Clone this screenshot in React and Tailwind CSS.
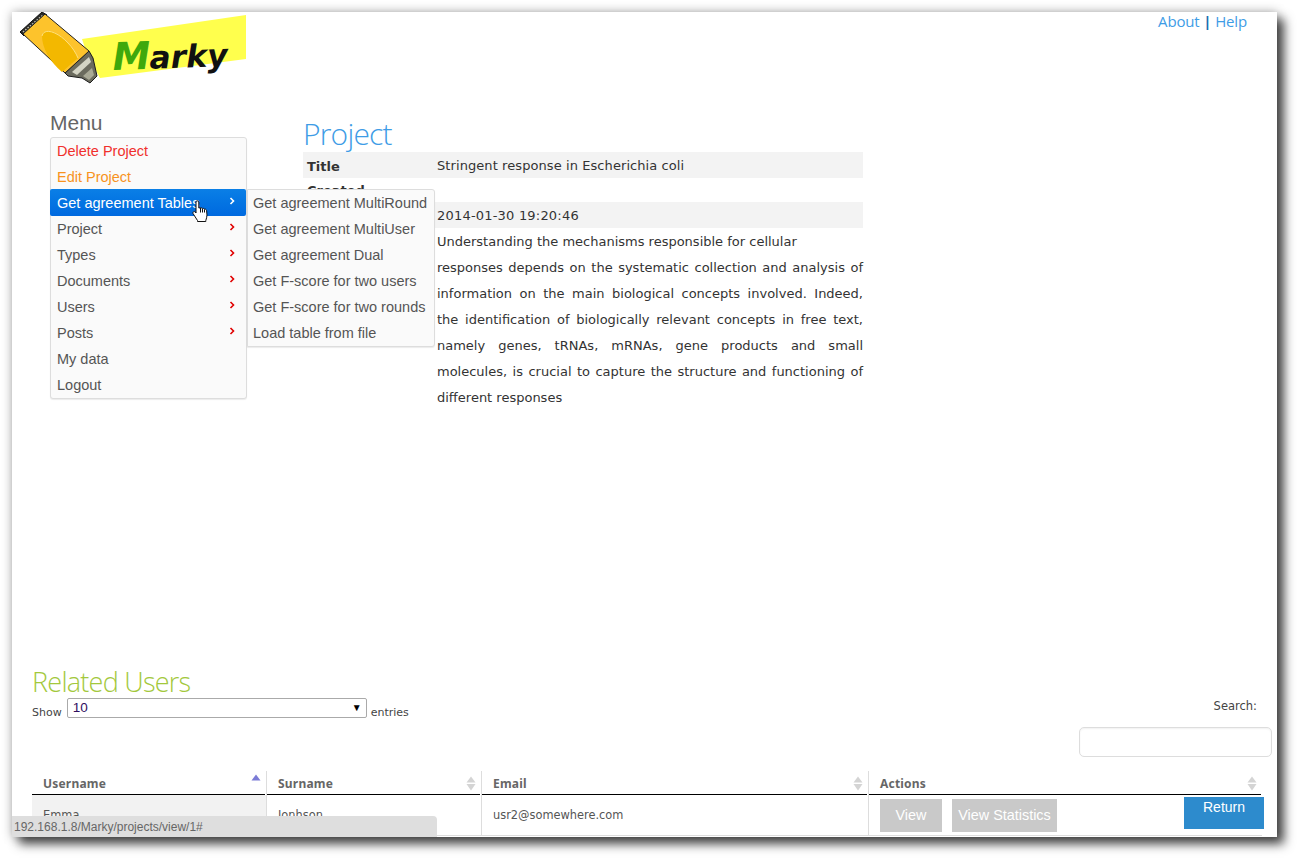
import React from "react";

const menuItems = [
  { label: "Delete Project", color: "text-[#f0302c]" },
  { label: "Edit Project", color: "text-[#f7931e]" },
  { label: "Get agreement Tables", arrow: true, active: true },
  { label: "Project", arrow: true },
  { label: "Types", arrow: true },
  { label: "Documents", arrow: true },
  { label: "Users", arrow: true },
  { label: "Posts", arrow: true },
  { label: "My data" },
  { label: "Logout" },
];

const subItems = [
  "Get agreement MultiRound",
  "Get agreement MultiUser",
  "Get agreement Dual",
  "Get F-score for two users",
  "Get F-score for two rounds",
  "Load table from file",
];

function Logo() {
  return (
    <svg width="240" height="88" viewBox="0 0 240 88" className="block">
      <polygon points="70,27 234,3 234,47 88,66 76,45" fill="#ffff4d" />
      {/* marker tip */}
      <polygon points="53,61 77,39 81,46 85,64 78,71 70,66 56,64" fill="#6b6b5e" stroke="#1c1c1c" strokeWidth="1" />
      <polygon points="60,60 77,45 79,50 65,63" fill="#d4d4c4" />
      <polygon points="71,64 80,56 82,63 77,68" fill="#a9a996" />
      {/* cap end with the ridges */}
      <polygon points="8,20 30,0 35,3 12,24" fill="#2b2b28" stroke="#111" strokeWidth="1" />
      <line x1="11" y1="20" x2="31" y2="3" stroke="#bdbdb0" strokeWidth="1.5" strokeDasharray="1.5 1.5" />
      {/* body */}
      <polygon points="33,2 77,39 53,61 11,22" fill="#fdc32c" stroke="#222" strokeWidth="1" />
      <path d="M30 24 C32 15 46 20 56 31 C60 35 64 41 66 46 L50 60 C38 50 30 36 30 24 Z" fill="#f3b800" />
      <path d="M30 24 C32 15 46 20 56 31 C60 35 64 41 66 46" fill="none" stroke="#fde07a" strokeWidth="1" />
      <text x="101" y="58" fontFamily="'DejaVu Sans', sans-serif" fontWeight="700" fontStyle="italic" fill="#111" transform="rotate(-2 101 58)">
        <tspan fill="#3fa80c" fontSize="38">M</tspan>
        <tspan dx="-1" fontSize="31.5">arky</tspan>
      </text>
    </svg>
  );
}

function HandCursor() {
  return (
    <svg width="17" height="23" viewBox="0 0 17 23" className="absolute left-[142px] top-[11px]">
      <path
        d="M4 1.5 C5 .5 6.5 .8 6.8 2 L6.8 8 L8.5 7.8 C9.3 7.5 10 8 10.2 8.6 C11 8 12 8.4 12.3 9.2 C13.2 8.8 14.4 9.4 14.6 10.6 L15 15 C15 17 14.3 18.5 13.8 20.5 L13.8 21.5 L5.5 21.5 L5.5 20.5 C4 18 2.5 16 1 13.5 C.5 12 2 11 3.3 12 L4 13 Z"
        fill="#fff"
        stroke="#111"
        strokeWidth="1"
      />
      <path d="M8.5 8 V12.5 M10.5 9 V12.5 M12.5 9.5 V12.5" stroke="#111" strokeWidth="1" />
    </svg>
  );
}

function Chevron({ white }) {
  return (
    <svg
      width="6"
      height="8"
      viewBox="0 0 6 8"
      className={white ? "absolute left-[179px] top-[8px]" : "absolute left-[178px] top-[7px]"}
    >
      <path d="M1.5 1 L4.5 4 L1.5 7" fill="none" stroke={white ? "#fff" : "#e00000"} strokeWidth="1.6" />
    </svg>
  );
}

function SortIcon({ asc }) {
  return (
    <svg
      width="10"
      height="15"
      viewBox="0 0 10 15"
      className={asc ? "absolute right-[4px] top-[3px]" : "absolute right-[4px] top-[5px]"}
    >
      <polygon points="5,0.5 9.5,6.5 .5,6.5" fill={asc ? "#7b7bd6" : "#d4d4d4"} />
      {!asc && <polygon points="5,14.5 9.5,8 .5,8" fill="#d4d4d4" />}
    </svg>
  );
}

function Menu() {
  return (
    <div className="w-[197px] relative">
      <h3 className="h-[25px] text-[21px] leading-[21px] text-[#666]">Menu</h3>
      <div className="border border-[#ddd] rounded-[3px] bg-[#fafafa] shadow-[0_1px_1px_rgba(0,0,0,0.08)]">
        {menuItems.map((item) => (
          <div
            key={item.label}
            className={
              item.active
                ? "relative -mt-px -ml-px h-[27px] pl-[7px] leading-[28px] text-[14.5px] whitespace-nowrap rounded-[2px] text-white bg-linear-to-b from-[#0b7fe6] to-[#0069df]"
                : "relative h-[26px] pl-[6px] leading-[26px] text-[14.5px] whitespace-nowrap " + (item.color || "text-[#555]")
            }
          >
            {item.label}
            {item.arrow && <Chevron white={item.active} />}
            {item.active && <HandCursor />}
          </div>
        ))}
      </div>
      <div className="absolute left-[197px] top-[77px] w-[188px] border border-[#ddd] rounded-r-[3px] bg-[#fafafa] shadow-[0_1px_1px_rgba(0,0,0,0.08)] z-10">
        {subItems.map((s) => (
          <div key={s} className="h-[26px] pl-[5px] leading-[26px] text-[14.5px] text-[#555] whitespace-nowrap">
            {s}
          </div>
        ))}
      </div>
    </div>
  );
}

function ProjectInfo() {
  const th = "w-[133px] pl-[4px] pt-[4px] leading-[22px] font-bold align-top text-left";
  const td = "pl-[1px] pt-[2px] leading-[24px] align-top";
  return (
    <div className="w-[560px] ml-[56px]">
      <h2 className="h-[40px] pt-[4px] text-[30px] leading-[36px] font-light text-[#3e9ce6] font-['Open_Sans',sans-serif] -tracking-[0.8px]">
        Project
      </h2>
      <table className="w-[560px] table-fixed border-collapse text-[13px] text-[#333] font-['DejaVu_Sans',sans-serif]">
        <tbody>
          <tr className="bg-[#f3f3f3] h-[26px]">
            <th className={th}>Title</th>
            <td className={td + " tracking-[0.08px]"}>Stringent response in Escherichia coli</td>
          </tr>
          <tr className="h-[24px]">
            <th className="w-[133px] pl-[4px] pt-[2px] leading-[22px] font-bold align-top text-left">Created</th>
            <td></td>
          </tr>
          <tr className="bg-[#f3f3f3] h-[26px]">
            <th className={th}>Modified</th>
            <td className={td + " tracking-[0.2px]"}>2014-01-30 19:20:46</td>
          </tr>
          <tr>
            <th className={th}>Description</th>
            <td className="pl-[1px] pt-[1px] leading-[26px] align-top text-justify">
              Understanding the mechanisms responsible for cellular
              <br />
              responses depends on the systematic collection and analysis of information on the main biological concepts
              involved. Indeed, the identification of biologically relevant concepts in free text, namely genes, tRNAs,
              mRNAs, gene products and small molecules, is crucial to capture the structure and functioning of different
              responses
            </td>
          </tr>
        </tbody>
      </table>
    </div>
  );
}

function UsersTable() {
  const cols = [
    { label: "Username", w: "w-[235px]", asc: true },
    { label: "Surname", w: "w-[215px]" },
    { label: "Email", w: "w-[387px]" },
    { label: "Actions", w: "w-[393px]" },
  ];
  const btn = "h-[33px] bg-[#c9c9c9] text-white text-center leading-[33px] text-[14.4px] font-['Liberation_Sans',sans-serif]";
  return (
    <table className="w-[1230px] table-fixed border-separate border-spacing-0 text-[11.4px] text-[#555] font-['DejaVu_Sans',sans-serif]">
      <thead>
        <tr>
          {cols.map((c, i) => (
            <th key={c.label} className={c.w + " p-0 text-left " + (i < 3 ? "border-r border-[#ddd]" : "")}>
              <div className="relative h-[24px] border-b border-black pl-[11px] leading-[25px] text-[12px] tracking-[0.2px] font-bold text-[#666] mr-px font-['Noto_Sans',sans-serif]">
                {c.label}
                <SortIcon asc={c.asc} />
              </div>
            </th>
          ))}
        </tr>
      </thead>
      <tbody>
        <tr>
          <td className="h-[41px] pl-[11px] pt-[2px] bg-[#f2f2f2] border-r border-b border-[#ddd]">Emma</td>
          <td className="pl-[11px] pt-[2px] border-r border-b border-[#ddd]">Jonhson</td>
          <td className="pl-[11px] pt-[2px] border-r border-b border-[#ddd]">usr2@somewhere.com</td>
          <td className="pl-[11px] border-b border-[#ddd]">
            <div className="flex gap-[10px]">
              <span className={btn + " w-[62px]"}>View</span>
              <span className={btn + " w-[105px]"}>View Statistics</span>
            </div>
          </td>
        </tr>
      </tbody>
    </table>
  );
}

export default function App() {
  return (
    <div className="w-[1297px] h-[858px] bg-white pt-[12px] pl-[12px] font-['Liberation_Sans',sans-serif]">
      <div className="w-[1265px] h-[825px] bg-white shadow-[0_0_10px_rgba(0,0,0,0.3),7px_7px_10px_rgba(0,0,0,0.7)]">
        <div className="relative w-full h-full overflow-hidden">
          <header className="flex justify-between h-[100px]">
            <Logo />
            <div className="pr-[30px] text-[15px] leading-[19px] tracking-[-0.15px] text-[#3e9ce6] font-['Open_Sans',sans-serif]">
              About <span className="font-bold text-[#1a6fb0]">|</span> Help
            </div>
          </header>

          <div className="flex h-[298px] pl-[38px]">
            <Menu />
            <ProjectInfo />
          </div>

          <section className="mt-[255px] ml-[20px] w-[1230px]">
            <h2 className="h-[33px] text-[27px] leading-[33px] font-light text-[#a3c83c] font-['Open_Sans',sans-serif] -tracking-[0.75px]">
              Related Users
            </h2>
            <div className="flex justify-between h-[73px] text-[11px] text-[#444] font-['DejaVu_Sans',sans-serif]">
              <div className="flex items-start gap-[4px]">
                <span className="pt-[7px] mr-px">Show</span>
                <div className="relative w-[300px] h-[20px] border border-[#aaa] rounded-[2px] bg-white pl-[5px] text-[13.5px] leading-[17px] text-[#30105f] font-['Liberation_Sans',sans-serif]">
                  10
                  <span className="absolute right-[4px] top-[1px] text-[10px] leading-[16px] text-black">▼</span>
                </div>
                <span className="pt-[7px]">entries</span>
              </div>
              <div className="flex flex-col items-end">
                <span className="mr-[5px] text-[11.5px]">Search:</span>
                <div className="mt-[12px] -mr-[10px] w-[193px] h-[30px] rounded-[5px] border border-[#ddd] bg-white shadow-[inset_0_1px_2px_rgba(0,0,0,0.06)]"></div>
              </div>
            </div>
            <UsersTable />
          </section>

          <a className="absolute left-[1172px] top-[785px] w-[80px] h-[32px] bg-[#2d8bcd] text-center text-white text-[14px] leading-[20px]">
            Return
          </a>
          <div className="absolute left-0 bottom-0 w-[425px] h-[21px] bg-[#dedede] rounded-tr-[4px] pl-[2px] text-[12px] leading-[22px] text-[#666]">
            192.168.1.8/Marky/projects/view/1#
          </div>
        </div>
      </div>
    </div>
  );
}
